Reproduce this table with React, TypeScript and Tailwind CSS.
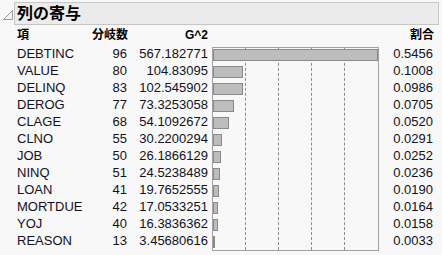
const rows: [string, number, string, number][] = [
  ["DEBTINC", 96, "567.182771", 0.5456],
  ["VALUE", 80, "104.83095", 0.1008],
  ["DELINQ", 83, "102.545902", 0.0986],
  ["DEROG", 77, "73.3253058", 0.0705],
  ["CLAGE", 68, "54.1092672", 0.052],
  ["CLNO", 55, "30.2200294", 0.0291],
  ["JOB", 50, "26.1866129", 0.0252],
  ["NINQ", 51, "24.5238489", 0.0236],
  ["LOAN", 41, "19.7652555", 0.019],
  ["MORTDUE", 42, "17.0533251", 0.0164],
  ["YOJ", 40, "16.3836362", 0.0158],
  ["REASON", 13, "3.45680616", 0.0033],
];

const font = { fontFamily: '"Liberation Sans", "Noto Sans CJK JP", sans-serif' };

export default function App() {
  const max = 0.5456;

  return (
    <div className="w-[442px] h-[255px] bg-[#f8f8f8] text-[#111122] overflow-hidden" style={font}>
      {/* Title bar */}
      <div className="flex items-center pt-[2px] pl-[2px]">
        <svg width="12" height="12" viewBox="0 0 12 12" className="mr-0 mt-[2px]">
          <polygon points="10.5,1.5 10.5,10.5 1.5,10.5" fill="#f4f4f4" stroke="#9a9a9a" strokeWidth="1" />
        </svg>
        <div className="ml-0 w-[425px] h-[23px] bg-[#ebebeb] border border-[#c6c6c6] flex items-center pl-[2px]">
          <span className="text-[16px] font-bold leading-none text-black">列の寄与</span>
        </div>
      </div>

      {/* Header row */}
      <div className="flex h-[17px] items-center pl-[17px] text-[12px] font-bold text-black leading-none mt-[1px]">
        <div className="w-[73px]">項</div>
        <div className="w-[38px] text-right">分岐数</div>
        <div className="w-[80px] text-right">G^2</div>
        <div className="w-[4px]" />
        <div className="w-[167px]" />
        <div className="w-[55px] text-right">割合</div>
      </div>

      {/* Body */}
      <div className="flex pl-[17px] mt-[2px] text-[13px]">
        <div className="flex flex-col">
          {rows.map(([name, n, g]) => (
            <div key={name} className="flex h-[17px] items-center leading-none">
              <div className="w-[73px]">{name}</div>
              <div className="w-[37px] text-right">{n}</div>
              <div className="w-[81px] text-right">{g}</div>
            </div>
          ))}
        </div>

        <div className="ml-[4px] mt-[2px] w-[167px] h-[204px] border border-[#a3a3a3] relative">
          <div className="absolute top-0 bottom-0 left-[32px] border-l border-dashed border-[#8c8c8c]" />
          <div className="absolute top-0 bottom-0 left-[65px] border-l border-dashed border-[#8c8c8c]" />
          <div className="absolute top-0 bottom-0 left-[98px] border-l border-dashed border-[#8c8c8c]" />
          <div className="absolute top-0 bottom-0 left-[131px] border-l border-dashed border-[#8c8c8c]" />
          <div className="relative flex flex-col">
            {rows.map(([name, , , r]) => (
              <div key={name} className="h-[17px] pt-[1px]">
                <div
                  className="h-[12px] bg-[#bdbdbd] border border-[#8a8a8a]"
                  style={{ width: Math.max(1, Math.round((r / max) * 165)) }}
                />
              </div>
            ))}
          </div>
        </div>

        <div className="flex flex-col w-[54px]">
          {rows.map(([name, , , r]) => (
            <div key={name} className="h-[17px] flex items-center justify-end leading-none">
              {r.toFixed(4)}
            </div>
          ))}
        </div>
      </div>
    </div>
  );
}
